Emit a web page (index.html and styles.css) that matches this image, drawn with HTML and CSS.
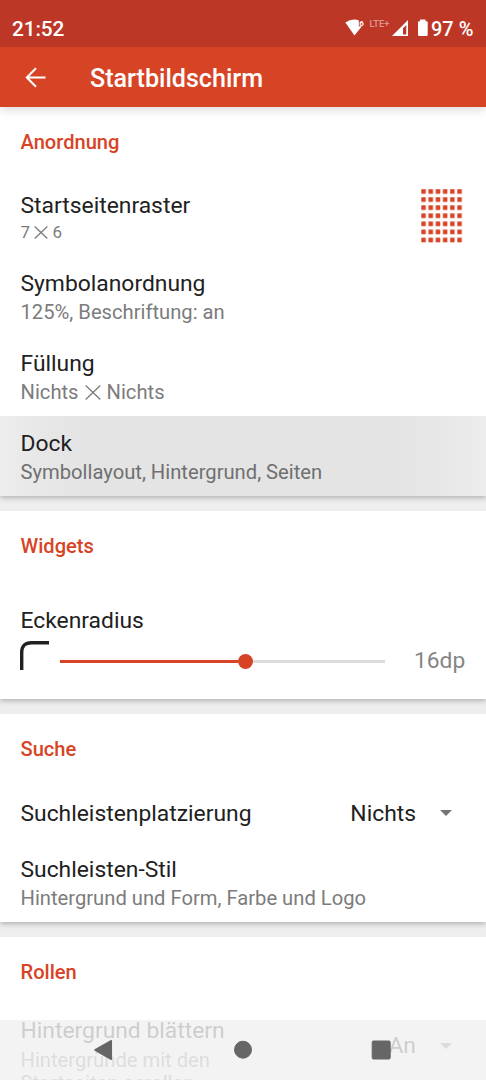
FILE: index.html
```html
<!DOCTYPE html>
<html lang="de">
<head>
<meta charset="utf-8">
<title>Startbildschirm</title>
<link rel="stylesheet" href="styles.css">
</head>
<body>
<div class="screen">
  <header class="statusbar">
    <span class="clock">21:52</span>
    <svg class="status-icons" width="101" height="47" viewBox="0 0 101 47">
      <path fill="#fff" d="M15.300 22.600Q19.500 19.500 24.500 19.500Q27 19.500 28.800 20.200V26.300H31.900L24.500 35.500Z"/>
      <path fill="#fff" d="M90 19.500h5.500v1.800h1.200q1 0 1 1v12.200q0 1.500-1.500 1.500h-6.700q-1.500 0-1.500-1.500v-12.200q0-1 1-1h1z"/>
      <path fill="#fff" fill-rule="evenodd" d="M62 36L78 20V36ZM73 28.200V34.500H76.300V24.900Z"/>
      <text class="wifi-gen" x="29.200" y="25.600">6</text>
      <text class="network" x="39.500" y="27">LTE+</text>
    </svg>
    <span class="level">97 %</span>
  </header>
  <nav class="toolbar">
    <svg class="back" width="22" height="22" viewBox="0 0 22 22" fill="none" stroke="#fff" stroke-width="2"><path d="M20.500 11.500H2M11 2.300L1.800 11.500L11 20.700"/></svg>
    <h1 class="heading">Startbildschirm</h1>
  </nav>
  <main class="content">
    <section class="card layout">
      <h2 class="section-title">Anordnung</h2>
      <div class="row grid-row">
        <div>
          <div class="title">Startseitenraster</div>
          <div class="sub small">7 <svg class="times" width="14" height="13" viewBox="0 0 14 13"><path d="M.7.5L13.300 12.500M13.300.5L.7 12.500"/></svg> 6</div>
        </div>
        <svg class="grid-icon" width="42" height="54" viewBox="0 0 42 54">
          <defs><pattern id="dots" width="7.200" height="8.080" patternUnits="userSpaceOnUse"><rect x=".3" y=".2" width="4.500" height="4.600" fill="#d74425"/></pattern></defs>
          <rect width="42" height="54" fill="url(#dots)"/>
        </svg>
      </div>
      <div class="row">
        <div class="title">Symbolanordnung</div>
        <div class="sub">125%, Beschriftung: an</div>
      </div>
      <div class="row">
        <div class="title">Füllung</div>
        <div class="sub">Nichts <svg class="times wide" width="16" height="15" viewBox="0 0 16 15"><path d="M.7.5L15.300 14.500M15.300.5L.7 14.500"/></svg> Nichts</div>
      </div>
      <div class="row pressed">
        <div class="title">Dock</div>
        <div class="sub">Symbollayout, Hintergrund, Seiten</div>
      </div>
    </section>
    <section class="card widgets">
      <h2 class="section-title">Widgets</h2>
      <div class="radius">
        <div class="title">Eckenradius</div>
        <div class="slider-row">
          <svg class="corner" width="29" height="29" viewBox="0 0 29 29"><path d="M1.700 29V11.500Q1.700 1.700 11.500 1.700H29" fill="none" stroke="#212121" stroke-width="3.400"/></svg>
          <div class="slider"><div class="filled"></div><div class="thumb"></div><div class="rest"></div></div>
          <span class="value">16dp</span>
        </div>
      </div>
    </section>
    <section class="card search">
      <h2 class="section-title">Suche</h2>
      <div class="choice">
        <span class="title">Suchleistenplatzierung</span>
        <span class="title picked">Nichts</span>
        <svg class="arrow" width="12" height="6" viewBox="0 0 12 6"><path d="M0 0H12L6 6Z" fill="#757575"/></svg>
      </div>
      <div class="row">
        <div class="title">Suchleisten-Stil</div>
        <div class="sub">Hintergrund und Form, Farbe und Logo</div>
      </div>
    </section>
    <section class="card scrolling">
      <h2 class="section-title">Rollen</h2>
      <div class="scroll-row">
        <div class="scroll-copy">
          <div class="title">Hintergrund blättern</div>
          <div class="sub wrap">Hintergründe mit den Startseiten scrollen</div>
        </div>
        <span class="title on">An</span>
        <svg class="arrow" width="12" height="6" viewBox="0 0 12 6"><path d="M0 0H12L6 6Z" fill="#757575"/></svg>
      </div>
    </section>
  </main>
  <div class="navbar">
    <svg width="486" height="60" viewBox="0 0 486 60" fill="#666" stroke="#666" stroke-linejoin="round">
      <path stroke-width="1.500" d="M95 30L111.300 20.700V39.300Z"/>
      <circle cx="243" cy="29.700" r="8.500"/>
      <rect x="372.200" y="21" width="18" height="18" rx="1.200"/>
    </svg>
  </div>
</div>
</body>
</html>
```
FILE: styles.css
```css
* { box-sizing: border-box; }
body { margin: 0; font-family: Roboto, "Liberation Sans", sans-serif; }
.screen {
  position: relative;
  width: 486px;
  height: 1080px;
  overflow: hidden;
  background: #eee;
  display: flex;
  flex-direction: column;
}
.statusbar {
  flex: none;
  height: 47px;
  background: #bd3727;
  color: #fff;
  display: flex;
  padding-left: 12px;
  font-size: 20px;
  font-weight: 500;
  line-height: 58px;
  position: relative;
  z-index: 2;
}
.clock { width: 318px; font-size: 20.8px; letter-spacing: -.1px; }
.status-icons { flex: none; }
.wifi-gen { font-size: 8px; fill: #fff; font-weight: 700; }
.network { font-size: 9.2px; fill: #df9a91; font-weight: 500; }
.level { font-size: 20px; white-space: nowrap; }
.toolbar {
  flex: none;
  height: 60px;
  background: #d74425;
  display: flex;
  align-items: center;
  padding-left: 25px;
  position: relative;
  z-index: 1;
  box-shadow: 0 2px 10px rgba(0,0,0,.16);
}
.heading { margin: 3px 0 0 43px; color: #fff; font-size: 25.1px; font-weight: 500; line-height: 30px; }
.content { display: flex; flex-direction: column; gap: 15px; }
.card {
  flex: none;
  background: #fff;
  box-shadow: 0 2px 5px rgba(0,0,0,.25);
  clip-path: inset(0 0 -12px 0);
}
.layout { height: 389px; }
.widgets { height: 188px; }
.search { height: 208px; }
.scrolling { height: 180px; }
.section-title {
  margin: 0;
  height: 66px;
  padding: 21px 20px 0 20.5px;
  color: #d74425;
  font-size: 20.1px;
  font-weight: 500;
  line-height: 28px;
}
.layout .section-title { height: 69px; }
.row { height: 80px; padding: 13px 20px 0 20.5px; }
.title { color: #212121; font-size: 22.85px; line-height: 29px; white-space: nowrap; }
.sub { color: #7c7c7c; font-size: 20.2px; line-height: 29px; white-space: nowrap; }
.grid-row { display: flex; justify-content: space-between; padding-right: 23px; padding-top: 15px; }
.small { font-size: 17px; line-height: 24px; }
.grid-icon { margin-top: -2px; }
.times { stroke: #7c7c7c; stroke-width: 1.3; vertical-align: -1px; }
.wide { margin: 0 1px; }
.pressed {
  background: linear-gradient(to right, #ededed 0, #e8e8e8 35px, #e4e4e4 85px, #e4e4e4 390px, #e7e7e7 440px, #ededed 486px);
}
.pressed .sub { color: #707070; }
.radius { padding: 29px 20px 0 20.5px; }
.slider-row { display: flex; align-items: center; height: 50px; margin: 1px 0 0 -.5px; }
.corner { margin-top: -12px; }
.slider { display: flex; align-items: center; width: 325px; margin-left: 11px; }
.filled { width: 178px; height: 3px; background: #d74425; }
.thumb { width: 15px; height: 15px; border-radius: 50%; background: #d74425; }
.rest { flex: 1; height: 3px; background: #dcdcdc; }
.value { margin: -1px 0 0 29px; font-size: 22.8px; line-height: 30px; color: #858585; }
.choice { display: flex; align-items: center; height: 62px; padding: 4px 34px 0 20.5px; }
.picked { margin-left: auto; }
.arrow { flex: none; margin-left: 24px; }
.scroll-row { display: flex; align-items: flex-start; padding: 13px 34px 0 20.5px; }
.scroll-copy { width: 250px; }
.wrap { width: 210px; white-space: normal; line-height: 23px; padding-top: 4px; }
.on { margin-left: auto; margin-top: 15px; }
.scroll-row .arrow { margin-top: 27px; }
.navbar { position: absolute; left: 0; bottom: 0; height: 60px; background: rgba(240,240,240,.83); }
.navbar svg { display: block; }
```
